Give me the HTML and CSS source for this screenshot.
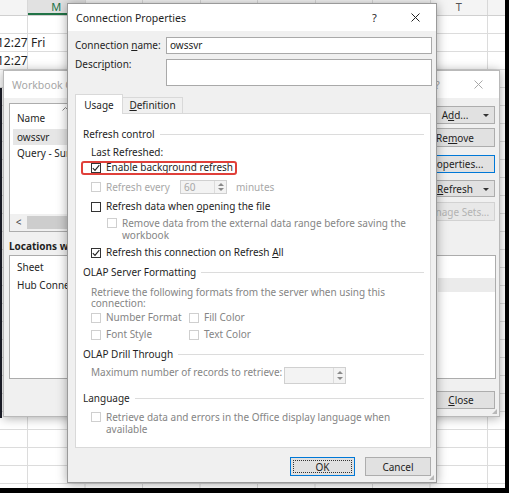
FILE: index.html
```html
<!DOCTYPE html>
<html lang="en">
<head>
    <meta charset="UTF-8">
    <title>Connection Properties</title>
    <link rel="stylesheet" href="styles.css">
</head>
<body>
<div class="screen">

    <!-- worksheet behind the dialogs -->
    <div class="sheet">
        <div class="heads">
            <div class="head"></div>
            <div class="head current">M</div>
            <div class="head">N</div>
            <div class="head">O</div>
            <div class="head">P</div>
            <div class="head">Q</div>
            <div class="head">R</div>
            <div class="head">S</div>
            <div class="head">T</div>
            <div class="head"></div>
        </div>
        <div class="cells">
            <div class="line"><span class="time">12:27</span><span class="day">Fri</span></div>
            <div class="line"><span class="time">12:27</span></div>
        </div>
    </div>
    <div class="edge"></div>

    <!-- Workbook Connections (inactive) -->
    <div class="window workbook">
        <div class="titlebar dim">
            <span class="caption">Workbook Connections</span>
            <span class="tb-button">?</span>
            <span class="tb-button"><svg width="9" height="9" viewBox="0 0 9 9"><path d="M0.5 0.5L8.5 8.5M8.5 0.5L0.5 8.5" stroke="#a8a8a8" stroke-width="1"/></svg></span>
        </div>
        <div class="wb-body">
            <div class="wb-top">
                <div class="listview upper">
                    <div class="lv-header">
                        <svg class="sort" width="7" height="4" viewBox="0 0 7 4"><path d="M0.5 3.5L3.5 0.5L6.5 3.5" fill="none" stroke="#888" stroke-width="1"/></svg>
                        <span>Name</span>
                    </div>
                    <div class="lv-item selected">owssvr</div>
                    <div class="lv-item">Query - Summary</div>
                    <div class="hscroll"><span class="scroll-arrow">&lt;</span><span class="thumb"></span></div>
                </div>
                <div class="side-buttons">
                    <button class="btn split"><span>A<u>d</u>d...</span><span class="drop"></span></button>
                    <button class="btn remove"><span>Re<u>m</u>ove</span></button>
                    <button class="btn default props-btn"><span><u>P</u>roperties...</span></button>
                    <button class="btn split refresh"><span><u>R</u>efresh</span><span class="drop"></span></button>
                    <button class="btn disabled manage"><span>Manage Sets...</span></button>
                </div>
            </div>
            <div class="locations">Locations where this connection is used in this workbook</div>
            <div class="listview lower">
                <div class="lv-header flat"><span>Sheet</span></div>
                <div class="lv-row"><span class="lv-cell">Hub Connections</span><span class="lv-cell shade"></span></div>
            </div>
            <div class="wb-footer">
                <button class="btn close-btn"><span><u>C</u>lose</span></button>
            </div>
        </div>
        <svg class="grip" width="7" height="7" viewBox="0 0 7 7"><path d="M6 1v5H1z" fill="#b8b8b8"/></svg>
    </div>

    <!-- Connection Properties (active) -->
    <div class="window props">
        <div class="titlebar">
            <span class="caption">Connection Properties</span>
            <span class="tb-button help">?</span>
            <span class="tb-button"><svg width="9" height="9" viewBox="0 0 9 9"><path d="M0.5 0.5L8.5 8.5M8.5 0.5L0.5 8.5" stroke="#222" stroke-width="1"/></svg></span>
        </div>
        <div class="props-body">
            <div class="field">
                <span class="field-label">Connection <u>n</u>ame:</span>
                <div class="textbox">owssvr</div>
            </div>
            <div class="field">
                <span class="field-label top">Descr<u>i</u>ption:</span>
                <div class="textbox tall"></div>
            </div>

            <div class="tabs">
                <span class="tab active">Usa<u>g</u>e</span>
                <span class="tab"><u>D</u>efinition</span>
            </div>

            <div class="tab-panel">
                <div class="group">Refresh control</div>
                <div class="opt mt5"><span>Last Refreshed:</span></div>
                <div class="opt mt2">
                    <span class="cb"><svg width="8" height="8" viewBox="0 0 8 8"><path d="M0.8 4.2L3 6.4L7.3 1.2" fill="none" stroke="#222" stroke-width="1.1"/></svg></span>
                    <span>Enable background refresh</span>
                    <span class="callout"></span>
                </div>
                <div class="opt mt6 off">
                    <span class="cb"></span>
                    <span class="spin-label">Refresh every</span>
                    <span class="spin small"><span class="spin-value">60</span><span class="spin-arrows"><i class="up"></i><i class="down"></i></span></span>
                    <span>minutes</span>
                </div>
                <div class="opt mt6">
                    <span class="cb"></span>
                    <span>Refresh data when <u>o</u>pening the file</span>
                </div>
                <div class="opt mt4 two sub grey">
                    <span class="cb"></span>
                    <span>Remove data from the external data range before saving the<br>workbook</span>
                </div>
                <div class="opt mt5">
                    <span class="cb"><svg width="8" height="8" viewBox="0 0 8 8"><path d="M0.8 4.2L3 6.4L7.3 1.2" fill="none" stroke="#222" stroke-width="1.1"/></svg></span>
                    <span>Refresh this connection on Refresh <u>A</u>ll</span>
                </div>

                <div class="group mt7">OLAP Server Formatting</div>
                <div class="opt mt8 note grey">Retrieve the following formats from the server when using this<br>connection:</div>
                <div class="opt-grid mt2 grey">
                    <span class="cell"><span class="cb"></span><span>Number Format</span></span>
                    <span class="cell"><span class="cb"></span><span>Fill Color</span></span>
                </div>
                <div class="opt-grid mt4 grey">
                    <span class="cell"><span class="cb"></span><span>Font Style</span></span>
                    <span class="cell"><span class="cb"></span><span>Text Color</span></span>
                </div>

                <div class="group mt7">OLAP Drill Through</div>
                <div class="opt mt5 max grey">
                    <span class="max-label">Maximum number of records to retrieve:</span>
                    <span class="spin large"><span class="spin-value"></span><span class="spin-arrows"><i class="up"></i><i class="down"></i></span></span>
                </div>

                <div class="group mt7">Language</div>
                <div class="opt mt6 two grey">
                    <span class="cb"></span>
                    <span>Retrieve data and errors in the Office display language when<br>available</span>
                </div>
            </div>

            <div class="props-footer">
                <button class="btn ok"><span class="focus">OK</span></button>
                <button class="btn cancel"><span>Cancel</span></button>
            </div>
        </div>
        <svg class="grip" width="7" height="7" viewBox="0 0 7 7"><path d="M6 1v5H1z" fill="#b8b8b8"/></svg>
    </div>

</div>
</body>
</html>
```

FILE: styles.css
```css
* {
    box-sizing: border-box;
}
body {
    margin: 0;
    background: #000;
    font-family: "Noto Sans", sans-serif;
    font-size: 10px;
    color: #1f1f1f;
}
.screen {
    position: relative;
    width: 505px;
    height: 488px;
    overflow: hidden;
    background: #fff;
}

/* worksheet */
.heads {
    display: flex;
    height: 16px;
    margin-left: -29.5px;
    background: #f4f4f4;
    border-bottom: 1px solid #d0d0d0;
    color: #555;
    font-size: 11px;
    line-height: 14px;
}
.head {
    flex: none;
    width: 57.5px;
    text-align: center;
    border-right: 1px solid #d8d8d8;
}
.head.current {
    background: #e1e1e1;
    color: #217346;
    border-bottom: 2px solid #217346;
}
.cells {
    height: 472px;
    padding-top: 17px;
    background-image: linear-gradient(to right, #dcdcdc 1px, transparent 1px), linear-gradient(#dcdcdc 1px, transparent 1px);
    background-size: 57.5px 18px;
    background-position: 27px 0, 0 17px;
    font-size: 12px;
}
.line {
    display: flex;
    align-items: center;
    height: 18px;
    padding-top: 1px;
}
.time {
    flex: none;
    width: 30px;
    margin-left: -3px;
    text-align: right;
}
.day {
    padding-left: 4px;
}
.edge {
    position: absolute;
    left: 0;
    top: 88px;
    width: 2px;
    height: 330px;
    background: #1d1f2a;
}

/* windows */
.window {
    position: absolute;
    background: #f0f0f0;
    border: 1px solid #9a9a9a;
    box-shadow: 0 1px 10px rgba(0, 0, 0, 0.35);
}
.workbook {
    left: 3px;
    top: 70px;
    width: 497px;
    height: 347px;
    border-color: #b9b9b9;
}
.props {
    left: 67px;
    top: 3px;
    width: 370px;
    height: 480px;
}
.titlebar {
    display: flex;
    align-items: center;
    height: 27px;
    padding-left: 8px;
    background: #fff;
    font-size: 10.5px;
}
.titlebar .caption {
    flex: 1;
}
.titlebar.dim {
    color: #a6a6a6;
}
.tb-button {
    display: flex;
    justify-content: center;
    width: 41px;
    font-size: 11px;
}
.grip {
    position: absolute;
    right: 1px;
    bottom: 1px;
}

/* buttons */
.btn {
    position: relative;
    display: flex;
    align-items: center;
    justify-content: center;
    height: 18px;
    padding: 0;
    border: 1px solid #adadad;
    background: #e1e1e1;
    font: inherit;
    color: inherit;
}
.btn.default {
    border-color: #0078d7;
}
.btn.disabled {
    color: #b3b3b3;
    border-color: #d2d2d2;
    background: #e8e8e8;
}
.drop {
    position: absolute;
    right: 5px;
    top: 7px;
    border-left: 3px solid transparent;
    border-right: 3px solid transparent;
    border-top: 3px solid #333;
}

/* workbook connections */
.wb-body {
    padding: 5px 4px 0 5px;
}
.wb-top {
    display: flex;
}
.listview {
    background: #fff;
    border: 1px solid #acacac;
}
.listview.upper {
    flex: 1;
    display: flex;
    flex-direction: column;
    height: 129px;
}
.lv-header {
    display: flex;
    flex-direction: column;
    height: 25px;
    padding: 3px 0 0 7px;
}
.lv-header .sort {
    margin-left: 45px;
}
.lv-header span {
    line-height: 13px;
    margin-top: 1px;
}
.lv-header.flat {
    height: 22px;
    padding-top: 4px;
}
.lv-item {
    height: 16px;
    line-height: 16px;
    margin-left: 3px;
    padding-left: 4px;
}
.lv-item.selected {
    background: #e6e6e6;
}
.hscroll {
    display: flex;
    height: 17px;
    margin-top: auto;
    background: #f0f0f0;
}
.scroll-arrow {
    width: 17px;
    text-align: center;
    line-height: 17px;
    color: #444;
}
.thumb {
    flex: 1;
    margin: 2px 0;
    background: #cdcdcd;
}
.side-buttons {
    display: flex;
    flex-direction: column;
    width: 80px;
    margin-left: 6px;
    padding-top: 3px;
}
.side-buttons .remove {
    margin-top: 4px;
    height: 19px;
}
.side-buttons .props-btn {
    margin-top: 8px;
}
.side-buttons .refresh {
    margin-top: 7px;
    height: 17px;
}
.side-buttons .manage {
    margin-top: 5px;
    height: 19px;
}
.locations {
    margin-top: 8px;
    line-height: 13px;
    font-weight: bold;
}
.listview.lower {
    height: 124px;
    margin: 2px -1px 0 0;
}
.lv-row {
    display: flex;
    height: 14px;
    line-height: 14px;
}
.lv-cell {
    flex: 1;
    padding-left: 7px;
}
.lv-cell.shade {
    flex: none;
    width: 57px;
    background: #ebebeb;
}
.wb-footer {
    display: flex;
    justify-content: flex-end;
    margin-top: 12px;
}
.close-btn {
    width: 68px;
}

/* connection properties */
.props-body {
    padding: 6px 4px 0 7px;
}
.field {
    display: flex;
}
.field + .field {
    margin-top: 5px;
}
.field-label {
    width: 91px;
    line-height: 17px;
}
.field-label.top {
    line-height: 11px;
}
.textbox {
    flex: 1;
    height: 17px;
    padding-left: 3px;
    border: 1px solid #a9a9a9;
    background: #fff;
    line-height: 15px;
}
.textbox.tall {
    height: 27px;
}
.tabs {
    position: relative;
    z-index: 1;
    display: flex;
    align-items: flex-end;
    height: 20px;
    margin: 8px 0 -1px;
}
.tab {
    width: 60px;
    height: 16px;
    margin-bottom: 1px;
    border: 1px solid #d9d9d9;
    border-left: none;
    border-bottom: none;
    text-align: center;
    line-height: 15px;
}
.tab.active {
    width: 48px;
    height: 20px;
    margin-bottom: 0;
    padding-top: 3px;
    border-left: 1px solid #d9d9d9;
    background: #fff;
}
.tab-panel {
    height: 335px;
    margin-right: 1px;
    padding: 14px 6px 0 7px;
    border: 1px solid #d9d9d9;
    background: #fff;
}
.group {
    display: flex;
    align-items: center;
    line-height: 13px;
}
.group::after {
    content: "";
    flex: 1;
    height: 1px;
    margin-left: 5px;
    background: #dcdcdc;
}
.opt {
    position: relative;
    display: flex;
    align-items: center;
    margin-left: 8px;
    line-height: 13px;
}
.opt.two {
    align-items: flex-start;
    line-height: 12px;
}
.opt.two .cb {
    margin-top: 1px;
}
.opt.sub {
    margin-left: 24px;
}
.opt.note {
    display: block;
    line-height: 11px;
}
.mt2 { margin-top: 2px; }
.mt4 { margin-top: 4px; }
.mt5 { margin-top: 5px; }
.mt6 { margin-top: 6px; }
.mt7 { margin-top: 7px; }
.mt8 { margin-top: 8px; }
.grey {
    color: #858585;
}
.off {
    color: #a8a8a8;
    height: 14px;
}
.cb {
    display: flex;
    align-items: center;
    justify-content: center;
    flex: none;
    width: 10px;
    height: 10px;
    margin-right: 5px;
    border: 1px solid #333;
    background: #fff;
}
.grey .cb,
.off .cb {
    border-color: #cfcfcf;
}
.callout {
    position: absolute;
    left: -10px;
    top: 0;
    width: 156px;
    height: 14px;
    border: 2px solid #e0403a;
    border-radius: 3px;
}
.spin-label {
    width: 74px;
}
.spin {
    display: flex;
    border: 1px solid #d0d0d0;
    background: #f3f3f3;
}
.spin.small {
    width: 47px;
    height: 14px;
    margin-right: 9px;
}
.spin.large {
    width: 62px;
    height: 17px;
    margin-top: 1px;
}
.spin-value {
    flex: 1;
    padding-left: 3px;
    line-height: 12px;
}
.spin-arrows {
    display: flex;
    flex-direction: column;
    justify-content: space-around;
    align-items: center;
    width: 12px;
    padding: 1px 0;
    border-left: 1px solid #dcdcdc;
}
.spin-arrows i {
    border-left: 3px solid transparent;
    border-right: 3px solid transparent;
}
.spin-arrows .up {
    border-bottom: 3px solid #8a8a8a;
}
.spin-arrows .down {
    border-top: 3px solid #8a8a8a;
}
.opt.max {
    align-items: flex-start;
    height: 19px;
}
.max-label {
    width: 193px;
}
.opt-grid {
    display: grid;
    grid-template-columns: 98px auto;
    margin-left: 8px;
    line-height: 13px;
}
.opt-grid .cell {
    display: flex;
    align-items: center;
}
.props-footer {
    display: flex;
    justify-content: flex-end;
    gap: 10px;
    margin-top: 9px;
    padding-right: 1px;
}
.props-footer .btn {
    height: 19px;
}
.ok {
    width: 65px;
    padding: 2px;
    border-color: #0078d7;
}
.ok .focus {
    display: flex;
    align-items: center;
    justify-content: center;
    align-self: stretch;
    flex: 1;
    border: 1px dotted #333;
}
.cancel {
    width: 66px;
}
```
